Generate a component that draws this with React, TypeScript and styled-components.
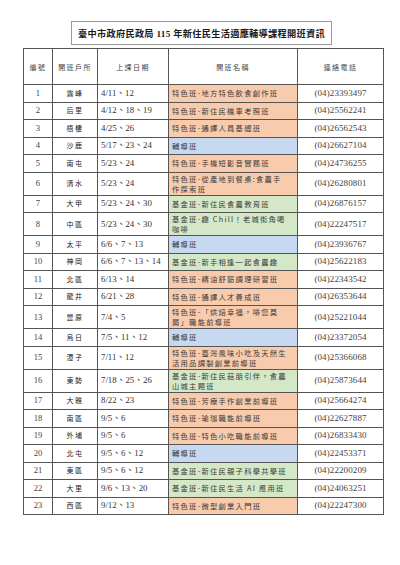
// React library
import React from "react";

// styled-component library for designing components
import styled, { createGlobalStyle } from "styled-components";

// -------------------- Custom Style using styled-component --------------------
const GlobalStyle = createGlobalStyle`
  body {
    margin: 0;
    background: #ffffff;
    font-family: "Liberation Serif", "Noto Sans CJK TC", serif;
  }
`;

const Page = styled.div`
  width: 400px;
  height: 565px;
  padding: 21px 0 0 23px;
  box-sizing: border-box;
  display: flex;
  flex-direction: column;
  align-items: flex-start;
  gap: 3px;
`;

const TitleBox = styled.div`
  margin-left: 48px;
  width: 261px;
  height: 24px;
  box-sizing: border-box;
  border: 1px solid #9a9a9a;
  display: flex;
  align-items: center;
  justify-content: center;
  font-family: "Liberation Serif", "Noto Sans CJK TC", serif;
  font-size: 9.2px;
  font-weight: 700;
  letter-spacing: 0.3px;
  color: #1a1a1a;
  white-space: nowrap;
`;

const Table = styled.table`
  width: 360px;
  border-collapse: collapse;
  table-layout: fixed;
  border: 1px solid #4a4a4a;
  font-size: 8px;
  line-height: 10px;
`;

const HeadCell = styled.th`
  height: 35px;
  padding: 0;
  border: 1px solid #555;
  font-family: "Noto Sans CJK TC", sans-serif;
  font-size: 7px;
  line-height: 10px;
  font-weight: 400;
  letter-spacing: 1.4px;
  color: #444;
  text-align: center;
`;

const Row = styled.tr<{ $tall?: boolean }>`
  height: ${(p) => (p.$tall ? "23px" : "17.5px")};
`;

const Cell = styled.td<{ $align?: "left" | "center" }>`
  padding: 0 0 0 ${(p) => (p.$align === "left" ? "3px" : "0")};
  border: 1px solid #555;
  font-size: 8px;
  line-height: 10px;
  text-align: ${(p) => p.$align || "center"};
  vertical-align: middle;
  white-space: nowrap;
  overflow: hidden;
`;

const NumText = styled.span`
  font-family: "Liberation Serif", serif;
  font-size: 8.6px;
  color: #444;
`;

const SiteText = styled.span`
  font-family: "Noto Sans CJK TC", sans-serif;
  font-size: 7px;
  letter-spacing: 1.6px;
  color: #222;
`;

const DateText = styled.span`
  font-family: "Liberation Serif", "Noto Sans CJK TC", serif;
  font-size: 8.8px;
  color: #333;
`;

const NameCell = styled.td<{ $kind: ClassKind }>`
  padding: 0 0 0 3px;
  border: 1px solid #555;
  background: ${(p) => kindColors[p.$kind]};
  font-size: 8px;
  line-height: 10px;
  vertical-align: middle;
  overflow: hidden;
`;

const NameText = styled.div`
  font-family: "Noto Sans CJK TC", sans-serif;
  font-size: 7.3px;
  line-height: 10px;
  letter-spacing: 1.25px;
  color: #3a3a3a;
  white-space: pre;
`;

const PhoneText = styled.span`
  font-family: "Liberation Serif", serif;
  font-size: 9px;
  letter-spacing: 0.1px;
  color: #444;
`;
// -------------------- Custom Style using styled-component --------------------

type ClassKind = "feature" | "fund" | "guide";

const kindColors: Record<ClassKind, string> = {
  feature: "#f8cbad",
  fund: "#d4e7c6",
  guide: "#c6d9f1",
};

interface CourseRow {
  no: number;
  site: string;
  dates: string;
  name: string;
  kind: ClassKind;
  phone: string;
}

const courses: CourseRow[] = [
  { no: 1, site: "霧峰", dates: "4/11、12", name: "特色班-地方特色飲食創作班", kind: "feature", phone: "(04)23393497" },
  { no: 2, site: "后里", dates: "4/12、18、19", name: "特色班-新住民機車考照班", kind: "feature", phone: "(04)25562241" },
  { no: 3, site: "梧棲", dates: "4/25、26", name: "特色班-通譯人員基礎班", kind: "feature", phone: "(04)26562543" },
  { no: 4, site: "沙鹿", dates: "5/17、23、24", name: "輔導班", kind: "guide", phone: "(04)26627104" },
  { no: 5, site: "南屯", dates: "5/23、24", name: "特色班-手機短影音實務班", kind: "feature", phone: "(04)24736255" },
  { no: 6, site: "清水", dates: "5/23、24", name: "特色班-從產地到餐桌:食農手\n作探索班", kind: "feature", phone: "(04)26280801" },
  { no: 7, site: "大甲", dates: "5/23、24、30", name: "基金班-新住民食農教育班", kind: "fund", phone: "(04)26876157" },
  { no: 8, site: "中區", dates: "5/23、24、30", name: "基金班-趣 Chill！老城街角喝\n咖啡", kind: "fund", phone: "(04)22247517" },
  { no: 9, site: "太平", dates: "6/6、7、13", name: "輔導班", kind: "guide", phone: "(04)23936767" },
  { no: 10, site: "神岡", dates: "6/6、7、13、14", name: "基金班-新手相逢一起食農趣", kind: "fund", phone: "(04)25622183" },
  { no: 11, site: "北區", dates: "6/13、14", name: "特色班-精油舒筋調理研習班", kind: "feature", phone: "(04)22343542" },
  { no: 12, site: "龍井", dates: "6/21、28", name: "特色班-通譯人才養成班", kind: "feature", phone: "(04)26353644" },
  { no: 13, site: "豐原", dates: "7/4、5", name: "特色班-「烘焙幸福，啡您莫\n屬」職能前導班", kind: "feature", phone: "(04)25221044" },
  { no: 14, site: "烏日", dates: "7/5、11、12", name: "輔導班", kind: "guide", phone: "(04)23372054" },
  { no: 15, site: "潭子", dates: "7/11、12", name: "特色班-臺灣風味小吃及天然生\n活用品調製創業前導班", kind: "feature", phone: "(04)25366068" },
  { no: 16, site: "東勢", dates: "7/18、25、26", name: "基金班-新住民菇朋引伴，食農\n山城主題班", kind: "fund", phone: "(04)25873644" },
  { no: 17, site: "大雅", dates: "8/22、23", name: "特色班-芳療手作創業前導班", kind: "feature", phone: "(04)25664274" },
  { no: 18, site: "南區", dates: "9/5、6", name: "特色班-瑜珈職能前導班", kind: "feature", phone: "(04)22627887" },
  { no: 19, site: "外埔", dates: "9/5、6", name: "特色班-特色小吃職能前導班", kind: "feature", phone: "(04)26833430" },
  { no: 20, site: "北屯", dates: "9/5、6、12", name: "輔導班", kind: "guide", phone: "(04)22453371" },
  { no: 21, site: "東區", dates: "9/5、6、12", name: "基金班-新住民親子科學共學班", kind: "fund", phone: "(04)22200209" },
  { no: 22, site: "大里", dates: "9/6、13、20", name: "基金班-新住民生活 AI 應用班", kind: "fund", phone: "(04)24063251" },
  { no: 23, site: "西區", dates: "9/12、13", name: "特色班-微型創業入門班", kind: "feature", phone: "(04)22247300" },
];

// JSX function starts from here
const App = (): JSX.Element => {
  return (
    <>
      <GlobalStyle />
      <Page>
        <TitleBox>臺中市政府民政局 115 年新住民生活適應輔導課程開班資訊</TitleBox>
        <Table>
          <colgroup>
            <col style={{ width: 29 }} />
            <col style={{ width: 45 }} />
            <col style={{ width: 71 }} />
            <col style={{ width: 129 }} />
            <col style={{ width: 86 }} />
          </colgroup>
          <thead>
            <tr>
              <HeadCell>編號</HeadCell>
              <HeadCell>開班戶所</HeadCell>
              <HeadCell>上課日期</HeadCell>
              <HeadCell>開班名稱</HeadCell>
              <HeadCell>連絡電話</HeadCell>
            </tr>
          </thead>
          <tbody>
            {courses.map((course) => (
              <Row key={course.no} $tall={course.name.includes("\n")}>
                <Cell>
                  <NumText>{course.no}</NumText>
                </Cell>
                <Cell>
                  <SiteText>{course.site}</SiteText>
                </Cell>
                <Cell $align="left">
                  <DateText>{course.dates}</DateText>
                </Cell>
                <NameCell $kind={course.kind}>
                  <NameText>{course.name}</NameText>
                </NameCell>
                <Cell>
                  <PhoneText>{course.phone}</PhoneText>
                </Cell>
              </Row>
            ))}
          </tbody>
        </Table>
      </Page>
    </>
  );
};

export default App;
